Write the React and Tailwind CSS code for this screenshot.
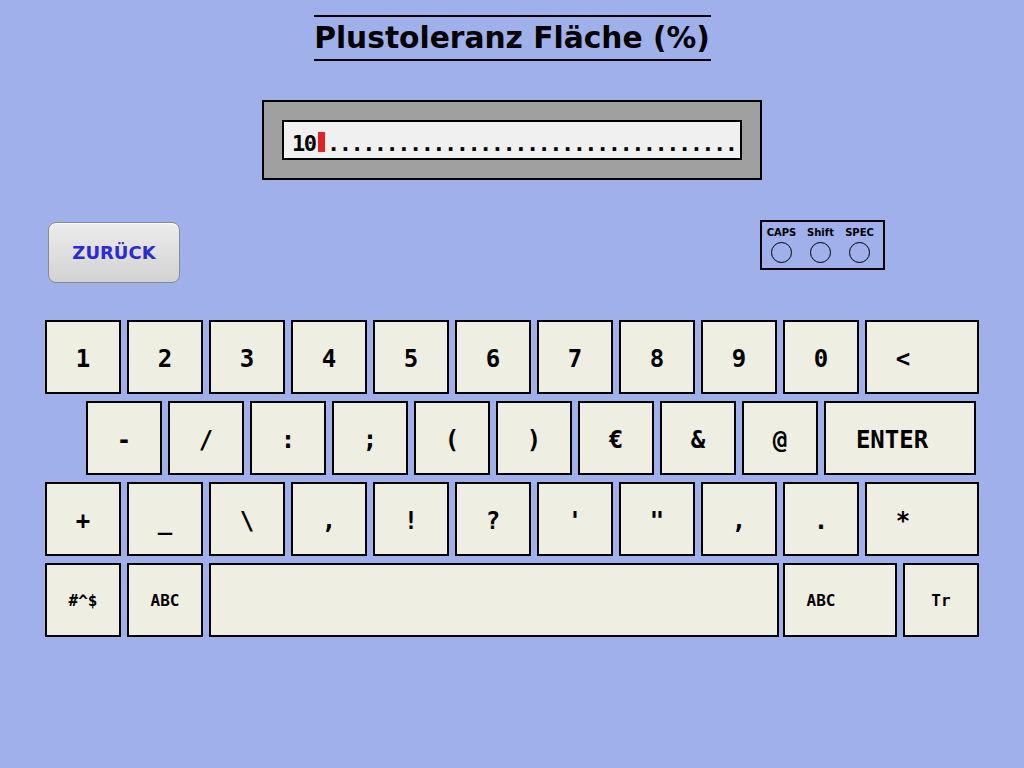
import React from "react";

const MONO = { fontFamily: '"DejaVu Sans Mono", monospace' };

// one keyboard key; pr shifts the label left on wide keys
function Key({ label, w = "w-[76px]", pr = "", small = false }) {
  return (
    <div
      className={`${w} h-[74px] shrink-0 border-2 border-black bg-[#efeee2] flex items-center justify-center font-bold text-black ${pr} ${
        small ? "text-[16px] pt-[2px]" : "text-[24px] pt-[3px]"
      }`}
      style={MONO}
    >
      {label}
    </div>
  );
}

export default function App() {
  const row1 = ["1", "2", "3", "4", "5", "6", "7", "8", "9", "0"];
  const row2 = ["-", "/", ":", ";", "(", ")", "€", "&", "@"];
  const row3 = ["+", "_", "\\", ",", "!", "?", "'", '"', ",", "."];

  return (
    <div
      className="w-[1024px] h-[768px] overflow-hidden bg-[#9fb0ea] pt-[15px]"
      style={{ fontFamily: '"DejaVu Sans", sans-serif' }}
    >
      {/* Title */}
      <div className="flex justify-center">
        <div className="w-[397px] h-[46px] border-y-2 border-black flex items-center justify-center text-[29.7px] font-bold text-black whitespace-nowrap">
          Plustoleranz Fläche (%)
        </div>
      </div>

      {/* Input field */}
      <div className="mt-[39px] mx-auto w-[500px] h-[80px] border-2 border-black bg-[#a0a0a0] p-[18px]">
        <div
          className="h-[40px] border-2 border-black bg-[#f0f0f0] pl-[8px] pb-[3px] flex items-end text-[22px] tracking-[-1.55px] leading-none font-bold text-black whitespace-nowrap overflow-hidden"
          style={MONO}
        >
          <span>10</span>
          <span className="w-[11.7px] mb-[3px] flex justify-center">
            <span className="block w-[7px] h-[20px] bg-[#e02424]" />
          </span>
          <span>{".".repeat(35)}</span>
        </div>
      </div>

      {/* Back button + lock indicators */}
      <div className="mt-[40px] h-[100px] flex justify-between items-start pl-[48px] pr-[139px]">
        <button className="mt-[2px] w-[132px] h-[61px] rounded-[8px] border border-[#8a8a8a] bg-gradient-to-b from-[#ececec] to-[#d2d2d2] shadow-[inset_0_1px_0_#fafafa] text-[18px] font-bold text-[#2a2ad6]">
          ZURÜCK
        </button>
        <div className="w-[125px] h-[50px] border-2 border-black flex pt-[5px]">
          {["CAPS", "Shift", "SPEC"].map((t) => (
            <div key={t} className="w-[39px] flex flex-col items-center">
              <span className="text-[10px] font-bold leading-[12px] text-black">{t}</span>
              <span className="mt-[3px] block w-[21px] h-[21px] rounded-full border border-black" />
            </div>
          ))}
        </div>
      </div>

      {/* Keyboard */}
      <div className="flex flex-col gap-[7px]">
        <div className="flex gap-[6px] pl-[45px]">
          {row1.map((k) => (
            <Key key={k} label={k} />
          ))}
          <Key label="<" w="w-[114px]" pr="pr-[38px]" />
        </div>
        <div className="flex gap-[6px] pl-[86px]">
          {row2.map((k) => (
            <Key key={k} label={k} />
          ))}
          <Key label="ENTER" w="w-[152px]" pr="pr-[16px]" />
        </div>
        <div className="flex gap-[6px] pl-[45px]">
          {row3.map((k, i) => (
            <Key key={i} label={k} />
          ))}
          <Key label="*" w="w-[114px]" pr="pr-[38px]" />
        </div>
        <div className="flex pl-[45px]">
          <Key label="#^$" small />
          <div className="ml-[6px]">
            <Key label="ABC" small />
          </div>
          <div className="ml-[6px]">
            <Key label="" w="w-[570px]" />
          </div>
          <div className="ml-[4px]">
            <Key label="ABC" w="w-[114px]" pr="pr-[38px]" small />
          </div>
          <div className="ml-[6px]">
            <Key label="Tr" small />
          </div>
        </div>
      </div>
    </div>
  );
}
